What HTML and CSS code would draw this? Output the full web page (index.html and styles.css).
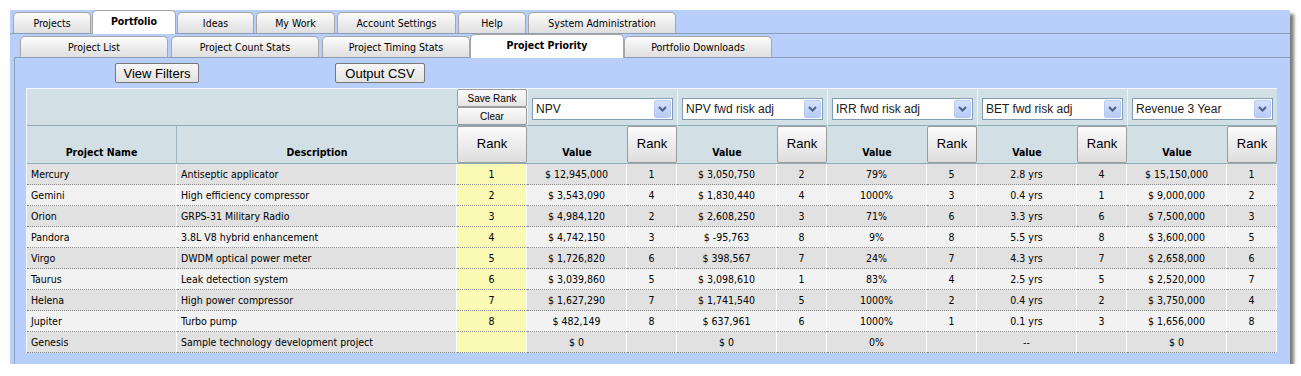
FILE: index.html
```html
<!doctype html>
<html lang="en">
<head>
  <title>Portfolio - Project Priority</title>
  <meta charset="utf-8">
<link rel="stylesheet" href="styles.css">
</head>
<body>

<div class="window">
  <div class="tabbar main-tabs">
    <a class="tab t-projects">Projects</a>
    <a class="tab t-portfolio active">Portfolio</a>
    <a class="tab t-ideas">Ideas</a>
    <a class="tab t-mywork">My Work</a>
    <a class="tab t-account">Account Settings</a>
    <a class="tab t-help">Help</a>
    <a class="tab t-sysadmin">System Administration</a>
  </div>
  <div class="tabbar sub-tabs">
    <a class="tab sub">Project List</a>
    <a class="tab sub">Project Count Stats</a>
    <a class="tab sub">Project Timing Stats</a>
    <a class="tab sub active">Project Priority</a>
    <a class="tab sub">Portfolio Downloads</a>
  </div>

  <div class="panel">
    <div class="toolbar">
      <button class="btn btn-filters">View Filters</button>
      <button class="btn btn-csv">Output CSV</button>
    </div>

    <table class="priority">
      <colgroup>
        <col class="c-name"><col class="c-desc"><col class="c-myrank">
        <col class="c-val"><col class="c-rank">
        <col class="c-val"><col class="c-rank">
        <col class="c-val"><col class="c-rank">
        <col class="c-val"><col class="c-rank">
        <col class="c-val"><col class="c-rank">
      </colgroup>
      <thead>
        <tr class="pick-row">
          <th colspan="2"></th>
          <th class="rank-tools">
            <button class="mini">Save Rank</button>
            <button class="mini">Clear</button>
          </th>
          <th colspan="2" class="pick-cell">
            <div class="picker"><span class="picker-text">NPV</span><span class="picker-arrow"><svg width="9" height="6" viewBox="0 0 9 6"><polyline points="1,1 4.5,4.5 8,1"/></svg></span></div>
          </th>
          <th colspan="2" class="pick-cell">
            <div class="picker"><span class="picker-text">NPV fwd risk adj</span><span class="picker-arrow"><svg width="9" height="6" viewBox="0 0 9 6"><polyline points="1,1 4.5,4.5 8,1"/></svg></span></div>
          </th>
          <th colspan="2" class="pick-cell">
            <div class="picker"><span class="picker-text">IRR fwd risk adj</span><span class="picker-arrow"><svg width="9" height="6" viewBox="0 0 9 6"><polyline points="1,1 4.5,4.5 8,1"/></svg></span></div>
          </th>
          <th colspan="2" class="pick-cell">
            <div class="picker"><span class="picker-text">BET fwd risk adj</span><span class="picker-arrow"><svg width="9" height="6" viewBox="0 0 9 6"><polyline points="1,1 4.5,4.5 8,1"/></svg></span></div>
          </th>
          <th colspan="2" class="pick-cell">
            <div class="picker"><span class="picker-text">Revenue 3 Year</span><span class="picker-arrow"><svg width="9" height="6" viewBox="0 0 9 6"><polyline points="1,1 4.5,4.5 8,1"/></svg></span></div>
          </th>
        </tr>
        <tr class="label-row">
          <th class="name-th">Project Name</th>
          <th>Description</th>
          <th class="rank-th"><button class="rank-btn">Rank</button></th>
          <th>Value</th><th class="rank-th"><button class="rank-btn">Rank</button></th>
          <th>Value</th><th class="rank-th"><button class="rank-btn">Rank</button></th>
          <th>Value</th><th class="rank-th"><button class="rank-btn">Rank</button></th>
          <th>Value</th><th class="rank-th"><button class="rank-btn">Rank</button></th>
          <th>Value</th><th class="rank-th"><button class="rank-btn">Rank</button></th>
        </tr>
      </thead>
      <tbody>
        <tr><td>Mercury</td><td>Antiseptic applicator</td><td class="my-rank">1</td><td>$ 12,945,000</td><td>1</td><td>$ 3,050,750</td><td>2</td><td>79%</td><td>5</td><td>2.8 yrs</td><td>4</td><td>$ 15,150,000</td><td>1</td></tr>
        <tr><td>Gemini</td><td>High efficiency compressor</td><td class="my-rank">2</td><td>$ 3,543,090</td><td>4</td><td>$ 1,830,440</td><td>4</td><td>1000%</td><td>3</td><td>0.4 yrs</td><td>1</td><td>$ 9,000,000</td><td>2</td></tr>
        <tr><td>Orion</td><td>GRPS-31 Military Radio</td><td class="my-rank">3</td><td>$ 4,984,120</td><td>2</td><td>$ 2,608,250</td><td>3</td><td>71%</td><td>6</td><td>3.3 yrs</td><td>6</td><td>$ 7,500,000</td><td>3</td></tr>
        <tr><td>Pandora</td><td>3.8L V8 hybrid enhancement</td><td class="my-rank">4</td><td>$ 4,742,150</td><td>3</td><td>$ -95,763</td><td>8</td><td>9%</td><td>8</td><td>5.5 yrs</td><td>8</td><td>$ 3,600,000</td><td>5</td></tr>
        <tr><td>Virgo</td><td>DWDM optical power meter</td><td class="my-rank">5</td><td>$ 1,726,820</td><td>6</td><td>$ 398,567</td><td>7</td><td>24%</td><td>7</td><td>4.3 yrs</td><td>7</td><td>$ 2,658,000</td><td>6</td></tr>
        <tr><td>Taurus</td><td>Leak detection system</td><td class="my-rank">6</td><td>$ 3,039,860</td><td>5</td><td>$ 3,098,610</td><td>1</td><td>83%</td><td>4</td><td>2.5 yrs</td><td>5</td><td>$ 2,520,000</td><td>7</td></tr>
        <tr><td>Helena</td><td>High power compressor</td><td class="my-rank">7</td><td>$ 1,627,290</td><td>7</td><td>$ 1,741,540</td><td>5</td><td>1000%</td><td>2</td><td>0.4 yrs</td><td>2</td><td>$ 3,750,000</td><td>4</td></tr>
        <tr><td>Jupiter</td><td>Turbo pump</td><td class="my-rank">8</td><td>$ 482,149</td><td>8</td><td>$ 637,961</td><td>6</td><td>1000%</td><td>1</td><td>0.1 yrs</td><td>3</td><td>$ 1,656,000</td><td>8</td></tr>
        <tr><td>Genesis</td><td>Sample technology development project</td><td class="my-rank"></td><td>$ 0</td><td></td><td>$ 0</td><td></td><td>0%</td><td></td><td>--</td><td></td><td>$ 0</td><td></td></tr>
      </tbody>
    </table>
  </div>
</div>

</body>
</html>
```

FILE: styles.css
```css
:root {
  --frame-color: #b8cffc;
  --line-color: #8c9fb6;
  --head-color: #d2e0e6;
  --head-line: #8fabb8;
  --row-dark: #e1e1e1;
  --row-light: #f2f2f2;
  --my-rank: #fafab5;
}
html {
  font-family: "DejaVu Sans Condensed", "DejaVu Sans", sans-serif;
  font-stretch: condensed;
  font-size: 10.5px;
}
body {
  margin: 0;
  background: #fff;
  color: #000;
}
button {
  font-family: "Liberation Sans", Arial, sans-serif;
  color: #000;
  cursor: pointer;
}
.window {
  margin: 10px 0 0 10px;
  width: 1280px;
  height: 354px;
  background: var(--frame-color);
  box-shadow: 4px 4px 3px rgba(0, 0, 0, .5);
}

/* tabs */
.tabbar {
  display: flex;
  align-items: flex-end;
  height: 23px;
  border-bottom: 1px solid var(--line-color);
}
.main-tabs {
  padding-left: 3px;
  gap: 2px;
}
.sub-tabs {
  margin-left: 4px;
  padding-left: 6px;
  gap: 3px;
}
.tab {
  flex: none;
  box-sizing: border-box;
  height: 21px;
  padding-top: 1px;
  line-height: 19px;
  text-align: center;
  border: 1px solid #a6a6a6;
  border-bottom: 0;
  border-radius: 5px 5px 0 0;
  background: linear-gradient(#fdfdfd, #eeeeee 45%, #dfdfdf);
  cursor: pointer;
}
.tab.active {
  position: relative;
  z-index: 1;
  height: 24px;
  margin-bottom: -1px;
  background: #fff;
  font-weight: bold;
}
.t-projects { width: 78px; }
.t-portfolio { width: 84px; margin: 0 -1px -1px; }
.t-ideas { width: 77px; }
.t-mywork { width: 79px; }
.t-account { width: 119px; }
.t-help { width: 68px; }
.t-sysadmin { width: 148px; }
.tab.sub { width: 148px; }
.tab.sub.active { width: 154px; margin: 0 -3px -1px; }

/* panel */
.panel {
  box-sizing: border-box;
  height: 306px;
  margin-left: 4px;
  padding: 5px 0 0 11px;
  border-left: 1px solid var(--line-color);
}
.toolbar {
  display: flex;
  margin-bottom: 5px;
}
.btn {
  height: 20px;
  padding: 0;
  font-size: 13px;
  border: 1px solid #777;
  border-radius: 2px;
  background: linear-gradient(#f7f7f7, #e2e2e2);
}
.btn-filters { width: 84px; margin-left: 89px; }
.btn-csv { width: 90px; margin-left: 136px; }

/* priority table */
.priority {
  width: 1250px;
  table-layout: fixed;
  border-collapse: separate;
  border-spacing: 0;
  border-top: 1px solid #f4f8fa;
  border-left: 1px solid #f4f8fa;
}
.c-name { width: 150px; }
.c-desc { width: 280px; }
.c-myrank { width: 70px; }
.c-val { width: 100px; }
.c-rank { width: 50px; }
.priority th {
  padding: 0;
  background: var(--head-color);
}
.pick-row th {
  vertical-align: top;
  border-bottom: 1px solid var(--head-line);
}
.pick-row .pick-cell {
  padding: 9px 4px 0;
  border-left: 1px solid #eef4f6;
}
.mini {
  display: block;
  width: 70px;
  height: 18px;
  padding: 0;
  font-size: 10px;
  border: 1px solid #9c9c9c;
  border-radius: 2px;
  background: linear-gradient(#fafafa, #e6e6e6);
}
.picker {
  display: flex;
  align-items: center;
  box-sizing: border-box;
  height: 22px;
  padding: 0 1px 0 3px;
  border: 1px solid #7f9db9;
  background: #fff;
  font: normal 12px "Liberation Sans", Arial, sans-serif;
  color: #1d1a1a;
  text-align: left;
  cursor: pointer;
}
.picker-text {
  flex: 1;
  white-space: nowrap;
  overflow: hidden;
}
.picker-arrow {
  display: flex;
  align-items: center;
  justify-content: center;
  box-sizing: border-box;
  width: 17px;
  height: 18px;
  border: 1px solid #b6caf4;
  border-radius: 2px;
  background: linear-gradient(#d5e1fd, #b7cbf8);
}
.picker-arrow polyline {
  fill: none;
  stroke: #4d6185;
  stroke-width: 2;
}
.label-row th {
  vertical-align: bottom;
  padding-bottom: 4px;
  line-height: 14px;
  border-bottom: 1px solid var(--head-line);
}
.label-row .name-th {
  border-right: 1px solid #9cb7c2;
}
.label-row .rank-th {
  vertical-align: top;
  padding-bottom: 0;
}
.rank-btn {
  display: block;
  width: 100%;
  height: 37px;
  padding: 0 0 2px;
  font-size: 13px;
  border: 1px solid #9c9c9c;
  border-radius: 2px;
  background: linear-gradient(#fbfbfb, #ececec 50%, #dddddd);
}
.priority td {
  padding: 0 4px;
  line-height: 20px;
  text-align: center;
  white-space: nowrap;
  overflow: hidden;
  border-right: 1px solid #fff;
  border-bottom: 1px dotted #8a8a8a;
  background: var(--row-dark);
}
.priority tbody tr:nth-child(even) td {
  background: var(--row-light);
}
.priority td:nth-child(1),
.priority td:nth-child(2) {
  text-align: left;
}
.priority tbody tr td.my-rank {
  background: var(--my-rank);
}
```
